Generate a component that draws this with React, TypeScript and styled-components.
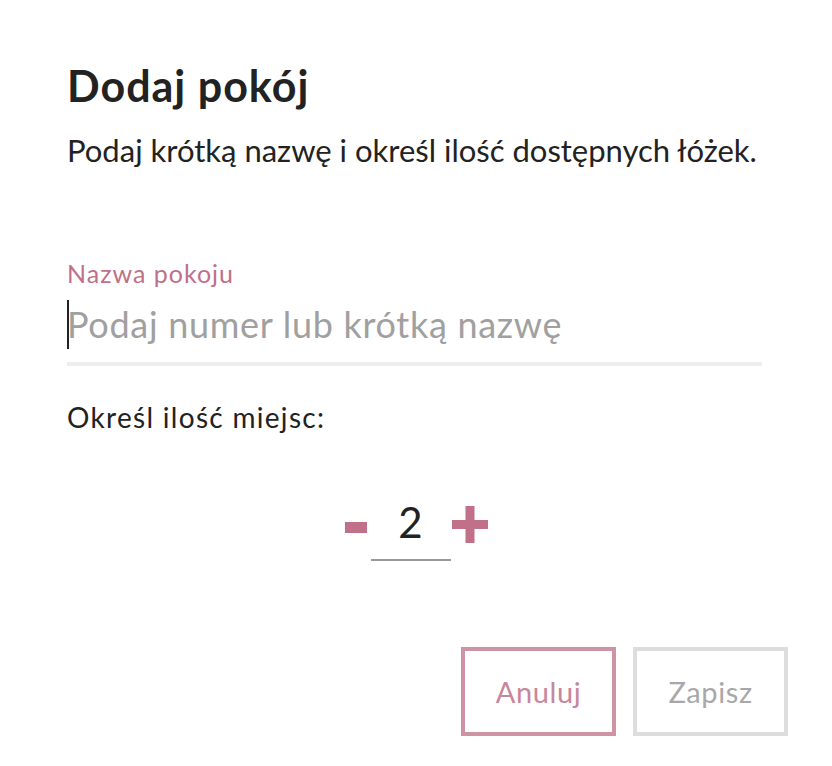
import React, { useState } from "react";
import styled, { createGlobalStyle } from "styled-components";

const GlobalStyle = createGlobalStyle`
  html, body {
    margin: 0;
    padding: 0;
    background: #fff;
  }
  body {
    font-family: Lato, "Noto Sans", sans-serif;
    color: #222;
  }
`;

const Dialog = styled.section`
  width: 832px;
  height: 766px;
  box-sizing: border-box;
  padding: 60px 44px 0 67px;
  display: flex;
  flex-flow: column;
`;

const Title = styled.h1`
  margin: 0;
  font-size: 43px;
  font-weight: 700;
  line-height: 52px;
  letter-spacing: 1px;
  color: #222;
`;

const Subtitle = styled.p`
  margin: 19px 0 0;
  font-size: 31px;
  line-height: 38px;
  color: #222;
`;

const Field = styled.label`
  display: flex;
  flex-flow: column;
  margin-top: 89px;
  width: 695px;
`;

const FieldLabel = styled.span`
  font-size: 25px;
  line-height: 30px;
  letter-spacing: 1px;
  color: #c07088;
`;

const InputWrap = styled.div`
  position: relative;
  margin-top: 12px;
`;

const TextInput = styled.input`
  display: block;
  width: 100%;
  box-sizing: border-box;
  height: 66px;
  border: none;
  border-bottom: 4px solid #eeeeee;
  outline: none;
  padding: 0 0 14px;
  font-family: inherit;
  font-size: 36px;
  line-height: 48px;
  letter-spacing: 0.7px;
  color: #222;
  background: transparent;

  &::placeholder {
    color: #a0a0a0;
  }
`;

const Caret = styled.span`
  position: absolute;
  left: 0;
  top: 0;
  width: 2px;
  height: 49px;
  background: #222;
  pointer-events: none;
`;

const Question = styled.p`
  margin: 34px 0 0;
  font-size: 28px;
  line-height: 34px;
  letter-spacing: 1.3px;
  color: #222;
`;

const Stepper = styled.div`
  display: flex;
  justify-content: center;
  align-items: flex-start;
  margin-top: 63px;
  margin-right: 23px;
`;

const StepButton = styled.button<{ $offset: number }>`
  background: none;
  border: none;
  padding: 0;
  margin-top: ${(p) => p.$offset}px;
  display: inline-flex;
  cursor: pointer;
  color: #c07088;
`;

const Count = styled.div`
  width: 80px;
  margin: 0 1px 0 4px;
  text-align: center;
  font-size: 42px;
  line-height: 50px;
  padding-bottom: 12px;
  border-bottom: 2px solid #999;
  color: #222;
`;

const Actions = styled.div`
  display: flex;
  justify-content: flex-end;
  gap: 17px;
  margin-top: 86px;
`;

const ActionButton = styled.button<{ $primary?: boolean }>`
  width: 155px;
  height: 89px;
  box-sizing: border-box;
  background: #fff;
  border: 4px solid ${(p) => (p.$primary ? "#cf94a4" : "#dddddd")};
  color: ${(p) => (p.$primary ? "#c8869c" : "#a8a8a8")};
  font-family: inherit;
  font-size: 29px;
  letter-spacing: 0.6px;
  cursor: pointer;
`;

const App: React.FC = () => {
  const [count, setCount] = useState(2);
  const [name, setName] = useState("");

  return (
    <>
      <GlobalStyle />
      <Dialog>
        <Title>Dodaj pokój</Title>
        <Subtitle>Podaj krótką nazwę i określ ilość dostępnych łóżek.</Subtitle>
        <Field>
          <FieldLabel>Nazwa pokoju</FieldLabel>
          <InputWrap>
            <TextInput
              value={name}
              onChange={(e) => setName(e.target.value)}
              placeholder="Podaj numer lub krótką nazwę"
            />
            {name === "" && <Caret />}
          </InputWrap>
        </Field>
        <Question>Określ ilość miejsc:</Question>
        <Stepper>
          <StepButton $offset={25} onClick={() => setCount((c) => Math.max(0, c - 1))} aria-label="minus">
            <svg width="22" height="11" viewBox="0 0 22 11">
              <rect x="0" y="0" width="22" height="11" fill="currentColor" />
            </svg>
          </StepButton>
          <Count>{count}</Count>
          <StepButton $offset={9} onClick={() => setCount((c) => c + 1)} aria-label="plus">
            <svg width="36" height="37" viewBox="0 0 36 37">
              <rect x="0" y="14" width="36" height="9" fill="currentColor" />
              <rect x="13.5" y="0" width="9" height="37" fill="currentColor" />
            </svg>
          </StepButton>
        </Stepper>
        <Actions>
          <ActionButton $primary>Anuluj</ActionButton>
          <ActionButton>Zapisz</ActionButton>
        </Actions>
      </Dialog>
    </>
  );
};

export default App;
